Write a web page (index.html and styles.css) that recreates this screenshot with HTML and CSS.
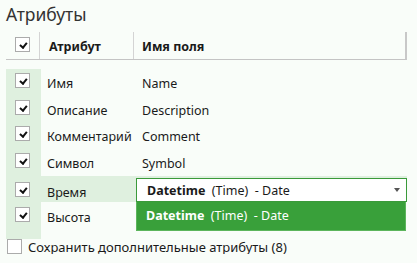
FILE: index.html
```html
<!DOCTYPE html>
<html>
   <head>
      <title>Атрибуты</title>
      <link rel="stylesheet" href="styles.css">
   </head>
   <body>
      <div class="panel">
         <h1 class="title">Атрибуты</h1>
         <div class="grid-head">
            <div class="col-check"><span class="box checked"></span></div>
            <div class="col-name">Атрибут</div>
            <div class="col-field">Имя поля</div>
         </div>
         <div class="rows">
            <div class="row">
               <div class="col-check"><span class="box checked"></span></div>
               <div class="col-name">Имя</div>
               <div class="col-field">Name</div>
            </div>
            <div class="row short">
               <div class="col-check"><span class="box checked"></span></div>
               <div class="col-name">Описание</div>
               <div class="col-field">Description</div>
            </div>
            <div class="row">
               <div class="col-check"><span class="box checked"></span></div>
               <div class="col-name">Комментарий</div>
               <div class="col-field">Comment</div>
            </div>
            <div class="row">
               <div class="col-check"><span class="box checked"></span></div>
               <div class="col-name">Символ</div>
               <div class="col-field">Symbol</div>
            </div>
            <div class="row active">
               <div class="col-check"><span class="box checked"></span></div>
               <div class="col-name">Время</div>
               <div class="col-field">
                  <div class="select">
                     <span><b>Datetime</b>&nbsp; (Time)&nbsp; - Date</span>
                     <span class="arrow"></span>
                  </div>
                  <div class="popup"><b>Datetime</b>&nbsp; (Time)&nbsp; - Date</div>
               </div>
            </div>
            <div class="row last">
               <div class="col-check"><span class="box checked"></span></div>
               <div class="col-name">Высота</div>
               <div class="col-field"></div>
            </div>
         </div>
         <label class="extra">
            <span class="box"></span>
            <span>Сохранить дополнительные атрибуты (8)</span>
         </label>
      </div>
   </body>
</html>
```

FILE: styles.css
```css
body {
   margin: 0;
   background: #f9fdf9;
   font-family: "Noto Sans", "Open Sans", sans-serif;
   font-size: 12.5px;
   color: #1a1a1a;
}
.panel {
   padding: 0 10px 0 6px;
   width: 401px;
}
.title {
   margin: 0;
   padding-top: 3px;
   height: 29px;
   font-size: 17.5px;
   font-weight: normal;
   line-height: 22px;
   color: #333;
}
.box {
   display: block;
   width: 13px;
   height: 13px;
   border: 1px solid #ababab;
   background: #fff;
   position: relative;
}
.box.checked::after {
   content: "";
   position: absolute;
   left: 4.5px;
   top: 2.5px;
   width: 2.5px;
   height: 5px;
   border: solid #111;
   border-width: 0 2.5px 2.5px 0;
   transform: rotate(40deg);
}
.grid-head {
   display: flex;
   height: 27px;
   border-bottom: 1px solid #c4c4c4;
   border-right: 2px solid #c8c8c8;
   font-weight: bold;
}
.grid-head .col-check {
   width: 34px;
   padding: 5px 0 0 9px;
   box-sizing: border-box;
   border-right: 1px solid #d4d4d4;
}
.grid-head .col-name {
   width: 94px;
   padding: 6px 0 0 9px;
   box-sizing: border-box;
   border-right: 1px solid #d4d4d4;
}
.grid-head .col-field {
   padding: 6px 0 0 8px;
}
.rows {
   margin-top: 9px;
   background: linear-gradient(to right, #dff0df 35px, transparent 35px);
}
.row {
   display: flex;
   height: 27px;
}
.row.short {
   height: 26px;
}
.row .col-check {
   width: 35px;
   padding: 4px 0 0 9px;
   box-sizing: border-box;
}
.row .col-name {
   width: 95px;
   padding: 6px 0 0 6px;
   box-sizing: border-box;
}
.row .col-field {
   flex: 1;
   padding: 6px 0 0 6px;
   position: relative;
}
.row.active {
   height: 26px;
   background: #dff0df;
}
.row.active .col-check {
   padding-top: 6px;
}
.row.active .col-name {
   padding-top: 8px;
}
.row.active .col-field {
   padding: 2px 0 0 0;
}
.row.last {
   height: 37px;
}
.row.last .col-check {
   padding-top: 5px;
}
.row.last .col-name {
   padding-top: 7px;
}
.select {
   display: flex;
   justify-content: space-between;
   align-items: center;
   height: 22px;
   border: 1px solid #3a9a3a;
   background: #fff;
   padding: 0 6px 0 10px;
}
.arrow {
   width: 0;
   height: 0;
   border-left: 3.5px solid transparent;
   border-right: 3.5px solid transparent;
   border-top: 4px solid #555;
}
.popup {
   position: absolute;
   left: 0;
   right: 1px;
   top: 26px;
   height: 28px;
   line-height: 28px;
   padding-left: 9px;
   background: #39a03a;
   border: 1px solid #5cb55c;
   border-top: none;
   color: #fff;
}
.extra {
   display: flex;
   align-items: center;
   gap: 6px;
   margin-left: 1px;
   height: 15px;
   font-size: 13px;
}
```
